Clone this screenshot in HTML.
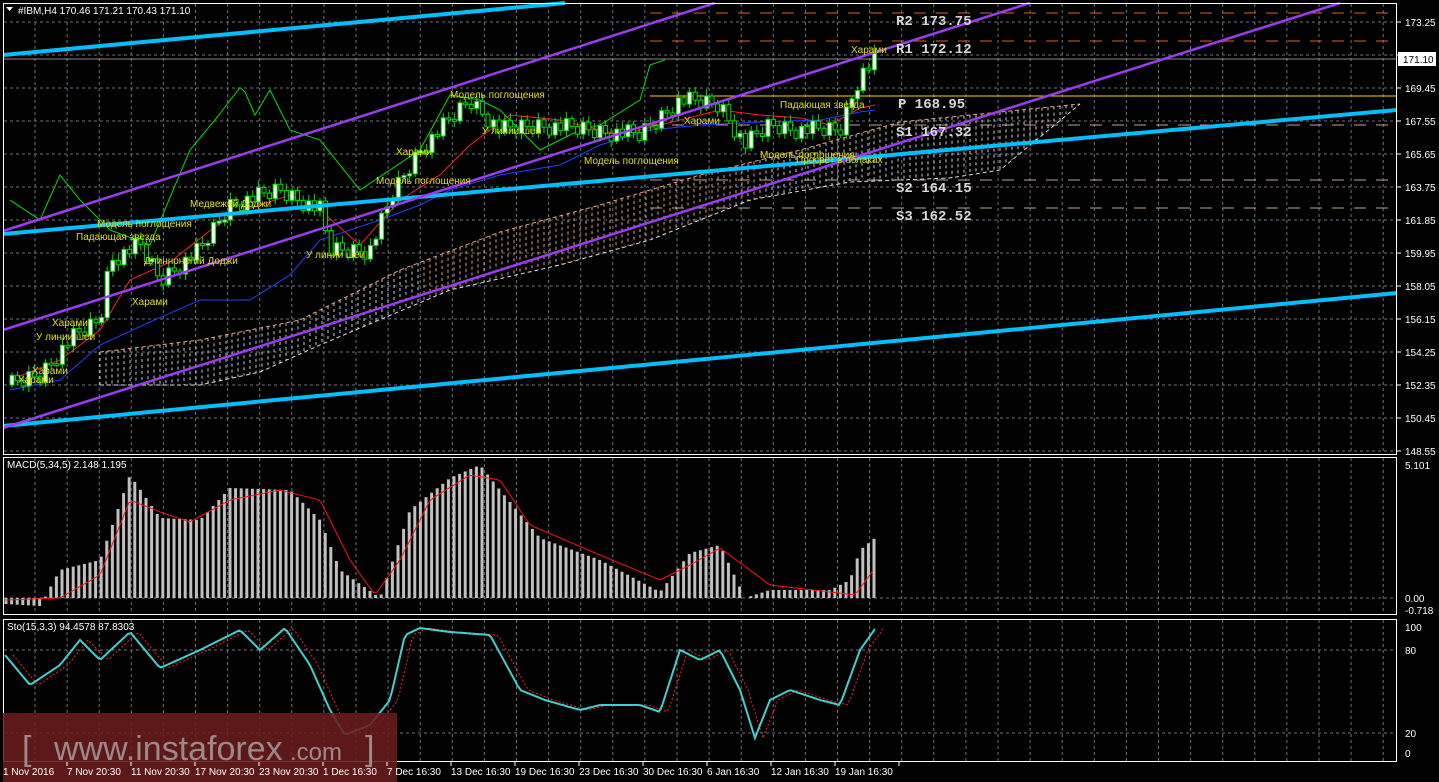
<!DOCTYPE html>
<html><head><meta charset="utf-8"><style>
html,body{margin:0;padding:0;background:#000;width:1439px;height:782px;overflow:hidden}
svg{display:block}
text{font-family:"Liberation Sans","DejaVu Sans",sans-serif;}
text.mono{font-family:"Liberation Mono","DejaVu Sans Mono",monospace;font-weight:bold}
</style></head><body>
<svg id="s" width="1439" height="782" viewBox="0 0 1439 782" xmlns="http://www.w3.org/2000/svg">
<rect width="1439" height="782" fill="#000"/>
<g id="grid"></g>
<g id="cloud"></g>
<line x1="650" y1="13" x2="1397" y2="13" stroke="#e0602a" stroke-dasharray="12,10"/>
<line x1="650" y1="41" x2="1397" y2="41" stroke="#e0602a" stroke-dasharray="12,10"/>
<line x1="3" y1="59" x2="1397" y2="59" stroke="#8a8a8a"/>
<line x1="650" y1="96" x2="1397" y2="96" stroke="#ffd000"/>
<line x1="650" y1="125" x2="1397" y2="125" stroke="#c8a090" stroke-dasharray="12,10"/>
<line x1="650" y1="180" x2="1397" y2="180" stroke="#c8a090" stroke-dasharray="12,10"/>
<line x1="650" y1="208" x2="1397" y2="208" stroke="#c8a090" stroke-dasharray="12,10"/>
<g id="ind"></g>
<g id="candles"></g>
<line x1="3" y1="55" x2="565" y2="3" stroke="#00bfff" stroke-width="4"/>
<line x1="3" y1="234" x2="1397" y2="110" stroke="#00bfff" stroke-width="4"/>
<line x1="3" y1="426" x2="1397" y2="293" stroke="#00bfff" stroke-width="4"/>
<line x1="3" y1="231" x2="715" y2="3" stroke="#9b3cf0" stroke-width="2.5"/>
<line x1="3" y1="330" x2="1030" y2="3" stroke="#9b3cf0" stroke-width="2.5"/>
<line x1="3" y1="428" x2="1340" y2="3" stroke="#9b3cf0" stroke-width="2.5"/>
<g font-size="14" fill="#d8d8d8">
<text class="mono" x="896" y="25">R2 173.75</text>
<text class="mono" x="896" y="53">R1 172.12</text>
<text class="mono" x="898" y="108">P 168.95</text>
<text class="mono" x="896" y="136">S1 167.32</text>
<text class="mono" x="896" y="192">S2 164.15</text>
<text class="mono" x="896" y="220">S3 162.52</text>
</g>
<g font-size="10" fill="#e0e000">
<text x="851" y="53">Харами</text>
<text x="780" y="108">Падающая звезда</text>
<text x="684" y="124">Харами</text>
<text x="760" y="158">Модель поглощения</text>
<text x="796" y="163">Просвет в облаках</text>
<text x="584" y="164">Модель поглощения</text>
<text x="450" y="98">Модель поглощения</text>
<text x="482" y="134">У линии шеи</text>
<text x="376" y="184">Модель поглощения</text>
<text x="396" y="155">Харами</text>
<text x="190" y="207">Медвежий Доджи</text>
<text x="97" y="227">Модель поглощения</text>
<text x="76" y="240">Падающая звезда</text>
<text x="144" y="264">Длинноногий Доджи</text>
<text x="132" y="305">Харами</text>
<text x="306" y="258">У линии шеи</text>
<text x="52" y="326">Харами</text>
<text x="36" y="340">У линии шеи</text>
<text x="32" y="374">Харами</text>
<text x="18" y="383">Харами</text>
</g>
<rect x="3.5" y="3.5" width="1393" height="451" fill="none" stroke="#fff"/>
<rect x="3.5" y="457.5" width="1393" height="157" fill="none" stroke="#fff"/>
<rect x="3.5" y="619.5" width="1393" height="142" fill="none" stroke="#fff"/>
<g id="axis" font-size="10" fill="#fff"></g>
<rect x="1398" y="52" width="38" height="14" fill="#fff"/>
<text x="1403" y="63" font-size="10" fill="#000">171.10</text>
<rect x="4" y="4" width="190" height="14" fill="#000"/>
<polygon points="6,7 13,7 9.5,11" fill="#fff"/>
<text x="18" y="14" font-size="10" fill="#fff">#IBM,H4  170.46 171.21 170.43 171.10</text>
<text x="7" y="468" font-size="10" fill="#fff">MACD(5,34,5) 2.148 1.195</text>
<text x="7" y="630" font-size="10" fill="#fff">Sto(15,3,3) 94.4578 87.8303</text>
<rect x="3" y="713" width="394" height="69" fill="#6a1c1c" opacity="0.88"/>
<text x="22" y="760" font-size="34" fill="#9a8a8a">[</text>
<text x="54" y="760" font-size="34" fill="#9a8a8a">www.instaforex</text>
<text x="290" y="760" font-size="24" fill="#9a8a8a">.com</text>
<text x="365" y="760" font-size="34" fill="#9a8a8a">]</text>
<g id="tl" font-size="10" fill="#fff"></g>
</svg>
<script>
(function(){
var NS="http://www.w3.org/2000/svg";
function el(p,t,a,txt){var e=document.createElementNS(NS,t);for(var k in a)e.setAttribute(k,a[k]);if(txt!=null)e.textContent=txt;document.getElementById(p).appendChild(e);return e;}
function interp(pts,x){for(var i=0;i<pts.length-1;i++){if(x>=pts[i][0]&&x<=pts[i+1][0]){var t=(x-pts[i][0])/(pts[i+1][0]-pts[i][0]);return pts[i][1]+t*(pts[i+1][1]-pts[i][1]);}}return x<pts[0][0]?pts[0][1]:pts[pts.length-1][1];}
for(var x=35;x<1397;x+=32.1){el("grid","line",{x1:x,y1:4,x2:x,y2:454,stroke:"#6b7380","stroke-dasharray":"3,3"});el("grid","line",{x1:x,y1:458,x2:x,y2:614,stroke:"#6b7380","stroke-dasharray":"3,3"});el("grid","line",{x1:x,y1:620,x2:x,y2:761,stroke:"#6b7380","stroke-dasharray":"3,3"});}
var prices=["173.25","171.35","169.45","167.55","165.65","163.75","161.85","159.95","158.05","156.15","154.25","152.35","150.45","148.55"];
for(var i=0;i<14;i++){var y=22+i*33;el("grid","line",{x1:4,y1:y,x2:1396,y2:y,stroke:"#6b7380","stroke-dasharray":"3,3"});el("axis","line",{x1:1397,y1:y,x2:1401,y2:y,stroke:"#fff"});el("axis","text",{x:1405,y:y+4},prices[i]);}
[[465,"5.101"],[598,"0.00"],[610,"-0.718"],[627,"100"],[650,"80"],[733,"20"],[753,"0"]].forEach(function(a){el("axis","text",{x:1405,y:a[0]+4},a[1]);});
[598,650,733].forEach(function(y){el("grid","line",{x1:4,y1:y,x2:1396,y2:y,stroke:"#6b7380","stroke-dasharray":"3,3"});});
var tl=["1 Nov 2016","7 Nov 20:30","11 Nov 20:30","17 Nov 20:30","23 Nov 20:30","1 Dec 16:30","7 Dec 16:30","13 Dec 16:30","19 Dec 16:30","23 Dec 16:30","30 Dec 16:30","6 Jan 16:30","12 Jan 16:30","19 Jan 16:30"];
tl.forEach(function(t,i){var x=3+i*64;el("tl","text",{x:x,y:775},t);el("tl","line",{x1:x+64,y1:762,x2:x+64,y2:766,stroke:"#fff"});});
var ctop=[[100,352],[200,340],[300,320],[400,270],[500,232],[600,205],[700,175],[800,150],[900,122],[1000,112],[1080,104]];
var cbot=[[100,385],[200,385],[260,372],[320,345],[450,290],[560,265],[650,240],[750,200],[850,182],[950,178],[1000,170],[1080,104]];
for(var x=100;x<1080;x+=6){var a=interp(ctop,x),b=interp(cbot,x);el("cloud","line",{x1:x,y1:a,x2:x,y2:b,stroke:(x<420||x>760)?"#ccc":"#e8a070","stroke-dasharray":"3,3","stroke-width":1});}
var p1="",p2="";for(var x=100;x<=1080;x+=4){p1+=(x==100?"M":"L")+x+","+interp(ctop,x);p2+=(x==100?"M":"L")+x+","+interp(cbot,x);}
el("cloud","path",{d:p1,stroke:"#e8a070",fill:"none","stroke-dasharray":"4,3"});el("cloud","path",{d:p2,stroke:"#ddd",fill:"none","stroke-dasharray":"4,3"});
var pk=[[10,385],[40,375],[70,340],[100,320],[110,260],[140,245],[160,280],[200,250],[230,205],[280,190],[320,210],[330,250],[370,250],[395,190],[420,150],[450,120],[470,100],[500,130],[540,125],[590,130],[640,135],[680,100],[720,105],[745,145],[770,125],[800,130],[840,130],[860,75],[875,60]];
var prev=interp(pk,5);
for(var x=12,n=0;x<=876;x+=5.6,n++){
 var c=interp(pk,x)+((n*37)%11-5)*1.8;var o=prev;var hi=Math.min(o,c)-3-(n%5);var lo=Math.max(o,c)+3+(n%4);
 el("candles","line",{x1:x,y1:hi,x2:x,y2:lo,stroke:"#00e000"});
 var bt=Math.min(o,c),h=Math.max(2,Math.abs(o-c));
 el("candles","rect",{x:x-2,y:bt,width:4,height:h,fill:c<o?"#fff":"#000",stroke:"#00e000","stroke-width":1});
 prev=c;}
var ch=[[10,200],[40,220],[60,175],[80,200],[110,230],[150,245],[190,150],[215,120],[242,85],[255,115],[270,90],[290,130],[320,140],[360,190],[390,170],[420,150],[450,95],[480,100],[500,110],[540,150],[580,130],[600,125],[640,100],[650,65],[665,60]];
var red=[[10,380],[60,360],[100,330],[130,280],[170,262],[230,215],[290,195],[320,210],[360,245],[400,200],[440,175],[470,145],[510,115],[560,120],[620,135],[680,120],[720,110],[760,115],[800,118],[830,125],[860,108],[875,105]];
var blue=[[10,390],[60,380],[100,345],[150,322],[200,300],[250,300],[290,275],[320,240],[380,220],[420,205],[450,190],[500,175],[560,165],[600,145],[650,130],[700,125],[760,122],[820,120],[860,112],[875,110]];
function path(pts,step){var d="";for(var x=pts[0][0];x<=pts[pts.length-1][0];x+=step)d+=(d?"L":"M")+x+","+interp(pts,x).toFixed(1);return d;}
el("ind","path",{d:path(ch,5),stroke:"#00e000",fill:"none"});
el("ind","path",{d:path(red,5),stroke:"#ff2020",fill:"none"});
el("ind","path",{d:path(blue,5),stroke:"#2040ff",fill:"none"});
var mh=[[5,604],[40,606],[60,570],[100,560],[130,475],[160,518],[200,520],[230,488],[290,490],[320,520],[340,570],[380,598],[410,510],[450,478],[480,465],[500,490],[540,538],[600,560],[660,592],[690,553],[720,545],[745,598],[770,590],[830,590],[850,580],[860,550],[875,538]];
var sg=[[5,600],[60,598],[100,575],[130,500],[160,512],[190,522],[230,500],[280,490],[320,500],[350,560],[375,595],[400,560],[430,500],[470,475],[500,480],[530,525],[600,555],[660,580],[690,565],[720,548],[750,570],[770,585],[830,592],[855,595],[875,568]];
for(var x=6;x<=876;x+=5.6){var y=interp(mh,x);el("ind","rect",{x:x-1.5,y:Math.min(y,598),width:3,height:Math.abs(y-598)||1,fill:"#c0c0c0"});}
el("ind","path",{d:path(sg,4),stroke:"#ff1010",fill:"none"});
var st=[[5,655],[30,685],[60,665],[80,640],[100,660],[130,632],[160,668],[200,650],[240,630],[260,650],[285,628],[310,665],[330,710],[345,735],[370,725],[390,700],[405,635],[420,628],[450,632],[490,635],[520,690],[545,700],[580,710],[600,705],[640,705],[660,712],[680,650],[700,660],[720,650],[740,690],[755,738],[770,700],[790,690],[820,700],[840,705],[860,650],[875,629]];
var ss=st.map(function(p){return [p[0]+8,p[1]];});
el("ind","path",{d:path(ss,3),stroke:"#ff2020",fill:"none","stroke-dasharray":"2,2"});
el("ind","path",{d:path(st,3),stroke:"#40d0d0",fill:"none","stroke-width":2});
})();
</script>
</body></html>
